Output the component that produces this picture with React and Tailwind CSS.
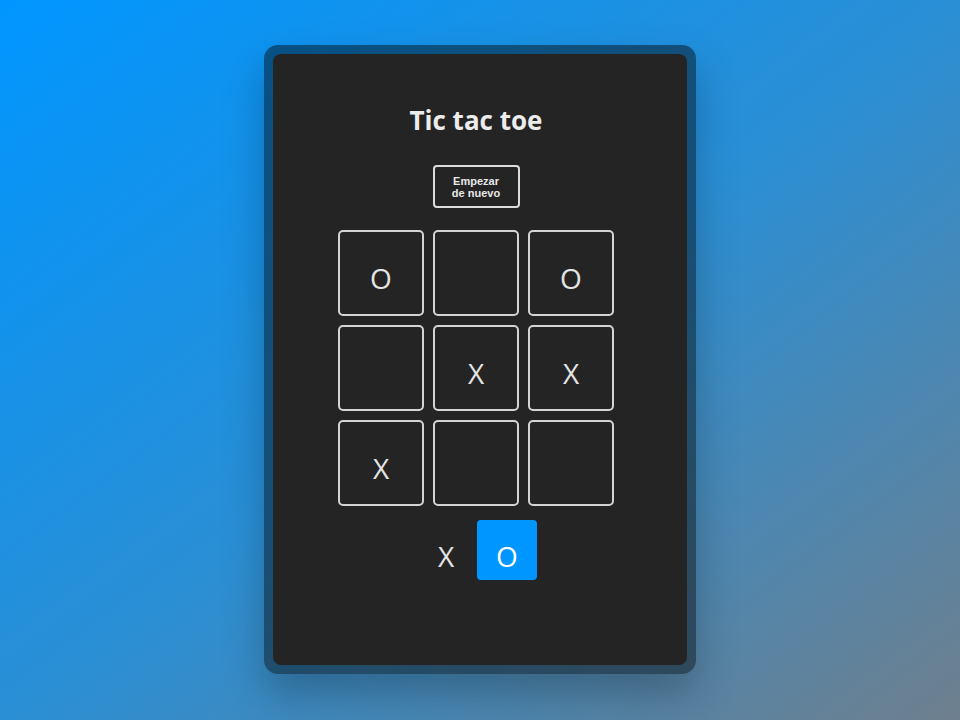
export default function App() {
  const cells = ["O", "", "O", "", "X", "X", "X", "", ""];
  return (
    <div
      className="w-[960px] h-[720px] flex items-start justify-center pt-[45px] bg-[linear-gradient(to_bottom_right,#0096ff_0%,#2a8fd5_50%,#6e7f8d_100%)]"
      style={{ fontFamily: '"Open Sans", "Noto Sans", sans-serif' }}
    >
      <div className="w-[432px] h-[629px] rounded-[14px] p-[9px] bg-black/45 shadow-[0_20px_40px_rgba(0,0,0,0.25)]">
        <div className="w-full h-full rounded-[8px] bg-[#242424] flex flex-col items-center pt-[48px] pr-[8px]">
          <h1 className="text-[26px] leading-[36px] font-bold text-[#ececec]">Tic tac toe</h1>
          <button
            className="mt-[27px] w-[87px] h-[43px] border-2 border-[#dcdcdc] rounded-[4px] text-[11px] leading-[12px] font-bold text-[#e8e8e8] flex items-center justify-center text-center"
            style={{ fontFamily: '"Liberation Sans", Arial, sans-serif' }}
          >
            Empezar
            <br />
            de nuevo
          </button>
          <div className="mt-[22px] grid grid-cols-[86px_86px_86px] grid-rows-[86px_86px_86px] gap-[9px]">
            {cells.map((c, i) => (
              <div
                key={i}
                className="border-2 border-[#d4d4d4] rounded-[5px] flex items-center justify-center pt-[10px] text-[28px] text-[#e4e4e4]"
              >
                {c}
              </div>
            ))}
          </div>
          <div className="mt-[14px] flex items-center gap-[16px] ml-[16px]">
            <div className="w-[30px] h-[60px] flex items-center justify-center pt-[11px] text-[28px] text-[#e4e4e4]">X</div>
            <div className="w-[60px] h-[60px] rounded-[4px] bg-[#0096ff] flex items-center justify-center pt-[11px] text-[28px] text-white">O</div>
          </div>
        </div>
      </div>
    </div>
  );
}
